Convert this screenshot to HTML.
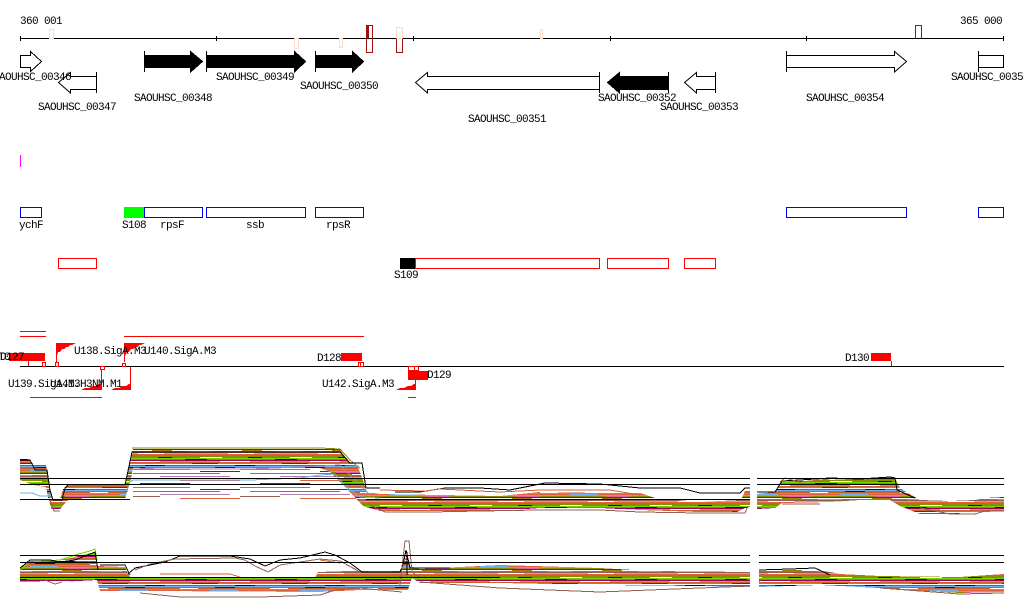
<!DOCTYPE html>
<html><head><meta charset="utf-8">
<style>
html,body{margin:0;padding:0;background:#fff;width:1024px;height:611px;overflow:hidden}
svg{display:block}
text{font-family:"Liberation Mono",monospace;font-size:11px;letter-spacing:-0.6px;fill:#000;white-space:pre}
</style></head>
<body>
<svg width="1024" height="611" viewBox="0 0 1024 611" xmlns="http://www.w3.org/2000/svg" shape-rendering="crispEdges">
<defs>
<pattern id="st" patternUnits="userSpaceOnUse" width="90" height="24">
<rect width="90" height="24" fill="#c06a30"/>
<rect y="0" width="90" height="1" fill="#8c8c00"/>
<rect y="1" width="90" height="1" fill="#d06030"/>
<rect y="2" width="90" height="1" fill="#70d800"/>
<rect y="3" width="90" height="1" fill="#b87020"/>
<rect y="4" width="90" height="1" fill="#a00060"/>
<rect y="5" width="90" height="1" fill="#c89070"/>
<rect y="6" width="90" height="1" fill="#c8622a"/>
<rect y="7" width="90" height="1" fill="#80a020"/>
<rect y="8" width="90" height="1" fill="#ffffff"/>
<rect y="9" width="90" height="1" fill="#c04040"/>
<rect y="10" width="90" height="1" fill="#70b0f0"/>
<rect y="11" width="90" height="1" fill="#a08000"/>
<rect y="12" width="90" height="1" fill="#c8622a"/>
<rect y="13" width="90" height="1" fill="#b080b0"/>
<rect y="14" width="90" height="1" fill="#e06040"/>
<rect y="15" width="90" height="1" fill="#70d800"/>
<rect y="16" width="90" height="1" fill="#8c8c00"/>
<rect y="17" width="90" height="1" fill="#a00060"/>
<rect y="18" width="90" height="1" fill="#ffffff"/>
<rect y="19" width="90" height="1" fill="#c8622a"/>
<rect y="20" width="90" height="1" fill="#906050"/>
<rect y="21" width="90" height="1" fill="#d8a080"/>
<rect y="22" width="90" height="1" fill="#e06040"/>
<rect y="23" width="90" height="1" fill="#8c8c00"/>
<rect x="5" y="3" width="22" height="1" fill="#101060"/>
<rect x="40" y="5" width="30" height="1" fill="#ffffff"/>
<rect x="12" y="7" width="26" height="1" fill="#a00060"/>
<rect x="55" y="9" width="20" height="1" fill="#101010"/>
<rect x="0" y="12" width="18" height="1" fill="#ffffff"/>
<rect x="30" y="14" width="28" height="1" fill="#70b0f0"/>
<rect x="66" y="16" width="24" height="1" fill="#e060a0"/>
<rect x="8" y="19" width="24" height="1" fill="#70d800"/>
<rect x="48" y="21" width="26" height="1" fill="#ffffff"/>
<rect x="20" y="1" width="22" height="1" fill="#ffffff"/>
<rect x="68" y="1" width="14" height="1" fill="#101060"/>
<rect x="35" y="11" width="20" height="1" fill="#101060"/>
<rect x="62" y="18" width="20" height="1" fill="#a08000"/>
</pattern>
<pattern id="sp" patternUnits="userSpaceOnUse" width="120" height="18">
<rect width="120" height="18" fill="#fff"/>
<rect x="0" y="1" width="70" height="1" fill="#e06040"/>
<rect x="80" y="3" width="40" height="1" fill="#a00060"/>
<rect x="10" y="5" width="90" height="1" fill="#c8622a"/>
<rect x="40" y="8" width="70" height="1" fill="#b080b0"/>
<rect x="0" y="10" width="40" height="1" fill="#906050"/>
<rect x="60" y="12" width="60" height="1" fill="#e06040"/>
<rect x="20" y="15" width="50" height="1" fill="#a00060"/>
</pattern>
</defs>
<rect width="1024" height="611" fill="#fff"/>

<!-- axis -->
<text x="20" y="24">360 001</text>
<text x="960" y="24">365 000</text>
<path d="M20 38.5H1004M20.5 36V41M216.5 36V41M413.5 36V41M610.5 36V41M806.5 36V41M1003.5 36V41" stroke="#000" fill="none"/>
<g fill="none" stroke="#fbdccc">
<rect x="49.5" y="29.5" width="4" height="9" fill="#fff"/>
<rect x="294.5" y="38.5" width="4" height="10" fill="#fff"/>
<rect x="339.5" y="38.5" width="3" height="9" fill="#fff"/>
<rect x="540.5" y="29.5" width="2" height="9" fill="#fff"/>
<rect x="396.5" y="27.5" width="6" height="11" fill="#fff"/>
</g>
<path d="M366.5 25.5H372.5V52.5H366.5Z" fill="none" stroke="#a01010"/>
<path d="M367 26H369V38H367Z" fill="#a01010"/>
<path d="M367 38.5H372" stroke="#000"/>
<path d="M396.5 38.5V52.5H402.5V38.5" fill="none" stroke="#a01010"/>
<path d="M915.5 38V25.5H921.5V38" fill="none" stroke="#a01010"/>

<!-- genes -->
<g stroke="#000" fill="#fff" shape-rendering="auto" stroke-width="1">
<path d="M20.5 55.5H30.5V51.5L41.5 61.5L30.5 71.5V67.5H20.5Z" shape-rendering="crispEdges"/>
<path d="M96.5 76.5H70.5V72.5L58.5 82.5L70.5 93V89.5H96.5Z"/>
<path d="M599.5 76.5H427.5V72.5L415.5 82.5L427.5 93V89.5H599.5Z"/>
<path d="M715.5 76.5H696.5V72.5L684.5 82.5L696.5 93V89.5H715.5Z"/>
<path d="M786.5 55.5H894.5V51.5L906.5 61.5L894.5 72V67.5H786.5Z"/>
<path d="M1003.5 55.5H978.5V67.5H1003.5Z"/>
</g>
<g fill="#000" stroke="#000">
<path d="M144.5 55.5H190.5V51.5L202.5 61.5L190.5 72V67.5H144.5Z"/>
<path d="M206.5 55.5H294.5V51.5L305.5 61.5L294.5 72V67.5H206.5Z"/>
<path d="M315.5 55.5H352.5V51.5L363.5 61.5L352.5 72V67.5H315.5Z"/>
<path d="M668.5 76.5H619.5V72.5L607.5 82.5L619.5 93V89.5H668.5Z"/>
</g>
<path d="M96.5 72V93M144.5 51V72M206.5 51V72M315.5 51V72M599.5 72V93M668.5 72V93M715.5 72V93M786.5 51V72M978.5 51V72" stroke="#000" fill="none"/>

<text x="-7" y="80">SAOUHSC_00346</text>
<text x="38" y="110">SAOUHSC_00347</text>
<text x="134" y="101">SAOUHSC_00348</text>
<text x="216" y="80">SAOUHSC_00349</text>
<text x="300" y="89">SAOUHSC_00350</text>
<text x="468" y="122">SAOUHSC_00351</text>
<text x="598" y="101">SAOUHSC_00352</text>
<text x="660" y="110">SAOUHSC_00353</text>
<text x="806" y="101">SAOUHSC_00354</text>
<text x="951" y="80">SAOUHSC_00355</text>

<path d="M20.5 155V167" stroke="#f0f"/>

<!-- blue annotations -->
<g fill="none" stroke="#0000ff">
<rect x="20.5" y="207.5" width="21" height="10"/>
<rect x="144.5" y="207.5" width="58" height="10"/>
<rect x="206.5" y="207.5" width="99" height="10"/>
<rect x="315.5" y="207.5" width="48" height="10"/>
<rect x="786.5" y="207.5" width="120" height="10"/>
<rect x="978.5" y="207.5" width="25" height="10"/>
</g>
<rect x="124" y="207" width="20" height="11" fill="#00ff00"/>
<text x="19" y="228">ychF</text>
<text x="122" y="228">S108</text>
<text x="160" y="228">rpsF</text>
<text x="246" y="228">ssb</text>
<text x="326" y="228">rpsR</text>

<!-- red annotations -->
<g fill="none" stroke="#ff0000">
<rect x="58.5" y="258.5" width="38" height="10"/>
<rect x="415.5" y="258.5" width="184" height="10"/>
<rect x="607.5" y="258.5" width="61" height="10"/>
<rect x="684.5" y="258.5" width="31" height="10"/>
</g>
<rect x="400" y="258" width="15" height="11" fill="#000"/>
<text x="394" y="278">S109</text>

<!-- operons / TSS -->
<path d="M20 331.5H46M20 336.5H46M124 336.5H364M30 397.5H102M408 397.5H416" stroke="#f00" fill="none"/>
<path d="M20 366.5H1004" stroke="#000"/>

<rect x="9" y="353" width="36" height="8" fill="#f00"/>
<rect x="341" y="353" width="21" height="8" fill="#f00"/>
<rect x="871" y="353" width="20" height="8" fill="#f00"/>
<rect x="408" y="371" width="20" height="9" fill="#f00"/>

<g fill="#f00">
<path d="M56 343H76L72 345H70L68 347H66L64 349H62L60 352H58L57 356V362H56Z"/>
<path d="M124 343H145L141 345H139L137 347H135L133 349H131L129 352H127L125 356V362H124Z"/>
<path d="M81 390L85 388H89L93 386H96L99 384H101V370H102V390Z"/>
<path d="M111 390L115 388H119L123 386H126L129 384H130V367H131V390Z"/>
<path d="M396 390L400 388H404L408 386H411L414 384H415V380H416V390Z"/>
</g>
<g fill="#fff" stroke="#f00">
<rect x="42.5" y="362.5" width="3" height="4"/>
<rect x="55.5" y="362.5" width="3" height="4"/>
<rect x="122.5" y="363.5" width="3" height="3"/>
<rect x="100.5" y="366.5" width="4" height="3"/>
<rect x="358.5" y="362.5" width="2" height="4"/>
<rect x="360.5" y="362.5" width="3" height="4"/>
<rect x="408.5" y="366.5" width="6" height="4"/>
<rect x="414.5" y="366.5" width="4" height="4"/>
</g>
<path d="M28.5 361V366M891.5 361V366" stroke="#f00"/>

<text x="-2" y="360">T0</text>
<text x="0" y="360">D127</text>
<text x="74" y="354">U138.SigA.M3</text>
<text x="144" y="354">U140.SigA.M3</text>
<text x="317" y="361">D128</text>
<text x="845" y="361">D130</text>
<text x="427" y="378">D129</text>
<text x="8" y="387">U139.SigA.M3</text>
<text x="50" y="387">U141.H3NM.M1</text>
<text x="322" y="387">U142.SigA.M3</text>

<!-- panel 1 -->
<path fill="url(#sp)" d="M133 462H340L352 472L362 490L366 500H133Z"/>
<path fill="url(#st)" d="M20 459H28L34 465H46L48 478L52 499H60L63 489L68 486H125L130 460L133 449H340L347 460L358 467L363 480L367 492L380 494L500 496L540 492L600 493L640 493L655 498L700 502L741 500L745 491L750 491V507L745 508L735 513L700 512L640 510L600 508L540 508L500 511L380 511L363 506L347 489L330 472L320 468L133 468L130 484L125 499L68 500L63 505L60 510H52L48 498L46 487L33 485L20 480Z"/>
<path fill="url(#st)" d="M757 494L775 492L782 482L800 481L830 480L890 477L895 478L900 488L920 500L950 501L975 500L985 498L1004 497V511L985 512L975 512L950 514L920 514L900 506L890 500L860 500L830 502L782 503L775 508L757 509Z"/>
<g fill="none" shape-rendering="crispEdges">
<path stroke="#70b0f0" d="M20 493H32L40 496H48L52 498M125 495L130 482L133 480H250L300 478L320 475L335 474L340 480L350 490L360 497L380 498"/>
<path stroke="#b080b0" d="M133 468L160 469H250L300 467L340 465L350 475L362 487L370 495"/>
<path stroke="#8c8c00" d="M132 448H320L340 449L350 460L360 468"/>
<path stroke="#000" d="M20 460H30L35 470H47L50 490L53 500H62L65 488L68 485H125L132 452H340L350 463H362L366 488H380"/>
<path stroke="#906050" d="M50 500L54 511H60M370 505L385 512H430L480 511L540 510L600 510L640 512L700 513L745 513L748 506"/>
<path stroke="#000" d="M395 492H420L445 488H480L510 490L545 483L600 484L640 488H680L700 493H740L745 488H750M757 492H775L782 481L800 480L830 478L860 479L890 477L895 478L897 490L915 498"/>
<path stroke="#d06030" d="M380 490L425 491L440 489L500 492L540 490L610 490L640 495M780 482L785 478L800 482L830 479"/>
<path stroke="#906050" d="M782 504H820M920 508L950 514H975L985 511H1004"/>
</g>
<path d="M20 478.5H750M757 478.5H1004M20 484.5H750M757 484.5H1004M20 499.5H130M366 499.5H750" stroke="#000" fill="none"/>

<!-- panel 2 -->
<path fill="url(#st)" d="M20 568L30 561L60 560L70 558L95 552L97 566L125 567L130 577L315 578L318 572L380 570L400 570L403 566L407 553L410 566L420 569L500 565L600 568L650 571L750 572V587L700 586L600 585L500 583L420 583L412 578L408 590L380 590L360 590L318 592L150 591L100 591L97 580L60 582L30 582L20 582Z"/>
<path fill="url(#st)" d="M759 570H820L840 574L880 576L960 577L1004 574V592L960 593L880 588L820 585L759 587Z"/>
<g fill="none" shape-rendering="crispEdges">
<path stroke="#70d800" d="M20 570L30 562L60 560L75 555L90 551L95 549L97 560"/>
<path stroke="#000" d="M20 568L30 560H50L60 562L75 560L95 552L98 570M128 574L135 568L165 562L180 556L230 556L250 559L265 566L280 560L300 558L325 552L335 555L350 563L362 572H400L403 565L406 550L410 568H450M759 570L790 569L815 568L830 575"/>
<path stroke="#906050" d="M45 580L55 584L62 582M135 570L150 564L175 559L235 558L245 560L255 566L268 572L280 565L300 562L320 559L340 561L362 573"/>
<path stroke="#906050" d="M400 585L405 541H409L412 572L420 578M140 593L180 597L260 597L320 595L335 590L360 588L380 590L402 592"/>
<path stroke="#d06030" d="M160 574H230L240 577M320 560L340 563"/>
<path stroke="#000" d="M100 565H125L130 575M407 552V575"/>
<path stroke="#906050" d="M420 582L500 588L600 592L750 586M880 588L960 594L1004 593"/>
</g>
<path d="M20 555.5H750M759 555.5H1004M20 562.5H750M759 562.5H1004M20 577.5H500" stroke="#000" fill="none"/>
</svg>
</body></html>
